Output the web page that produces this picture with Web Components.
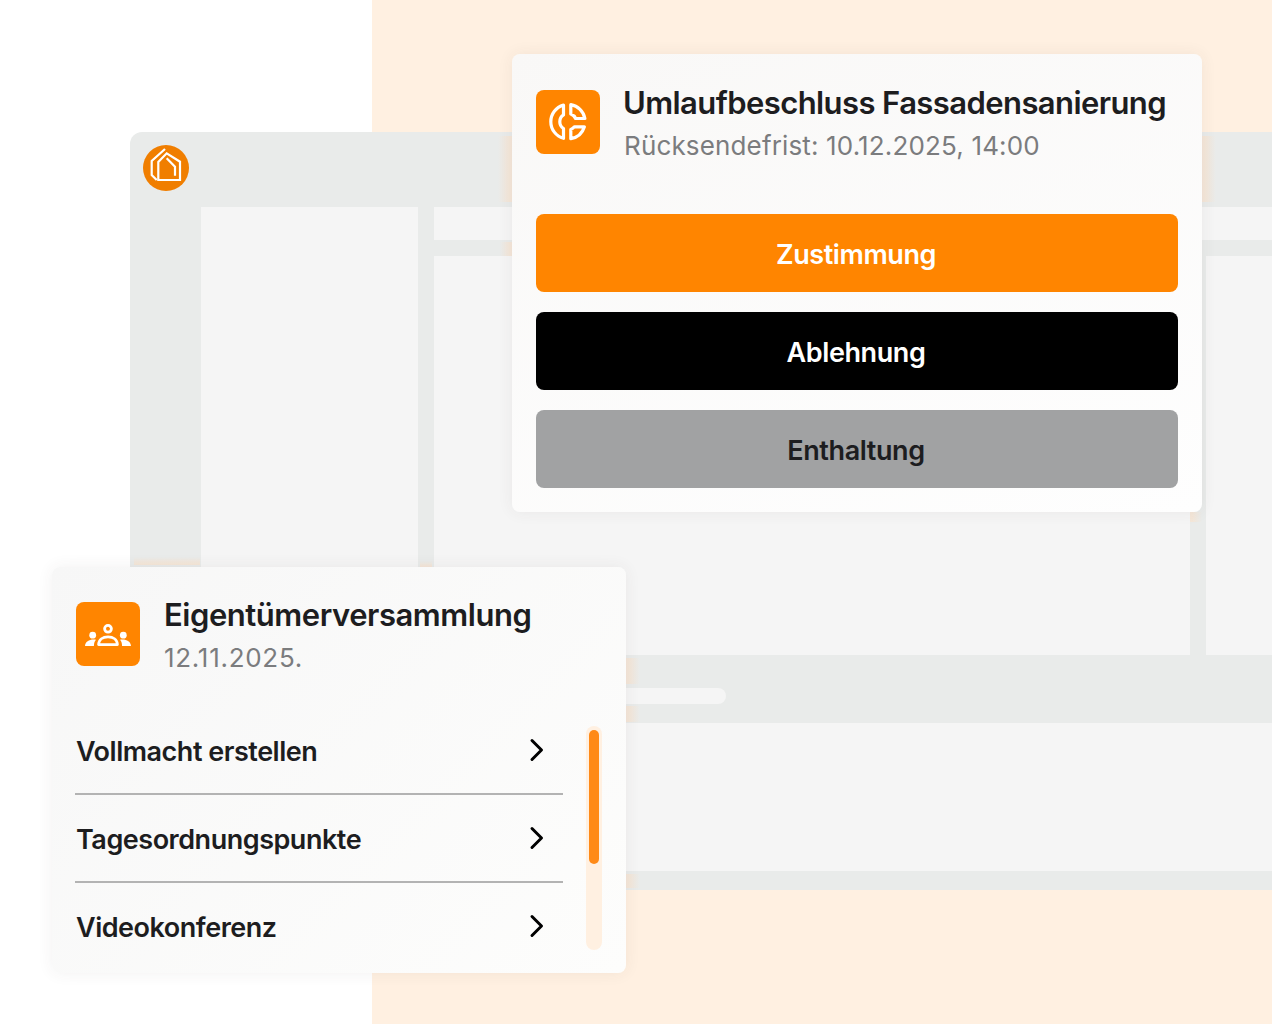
<!DOCTYPE html>
<html lang="de">
<head>
<meta charset="utf-8">
<title>Eigentümerversammlung</title>
<style>
    html, body { margin: 0; background: #fff; }
    body { font-family: Inter, "Liberation Sans", sans-serif; }
</style>
</head>
<body>
<demo-stage>
    <app-window></app-window>
    <vote-card slot="over" titel="Umlaufbeschluss Fassadensanierung" info="Rücksendefrist: 10.12.2025, 14:00">
        <svg slot="icon" viewBox="0 0 64 64" width="64" height="64" fill="none" stroke="#fff" stroke-width="3.2" stroke-linejoin="round">
            <path d="M27.5 15.1A17.2 17.2 0 0 0 27.5 48.3V38.5A8.1 8.1 0 0 1 27.5 24.9Z"/>
            <path d="M34.8 14.7A17.2 17.2 0 0 1 48.9 28.5H39.6A8.2 8.2 0 0 0 34.8 24Z"/>
            <path d="M48.4 36.8A17.2 17.2 0 0 1 34.8 48.7V39.4A8.2 8.2 0 0 0 38.4 36.8Z"/>
        </svg>
        <vote-button farbe="orange">Zustimmung</vote-button>
        <vote-button farbe="schwarz">Ablehnung</vote-button>
        <vote-button farbe="grau">Enthaltung</vote-button>
    </vote-card>
    <event-card slot="over" titel="Eigentümerversammlung" info="12.11.2025.">
        <svg slot="icon" viewBox="0 0 64 64" width="64" height="64" fill="#fff">
            <path fill="none" stroke="#fff" stroke-width="2.8" d="M32 23.4a3.4 3.4 0 1 0 0 6.8a3.4 3.4 0 1 0 0-6.8Z"/>
            <path fill="none" stroke="#fff" stroke-width="2.8" stroke-linejoin="round" d="M22.6 42.6C22.8 37.4 27 34.8 32 34.8C37 34.8 41.2 37.4 41.4 42.6Z"/>
            <circle cx="16.7" cy="33.2" r="3.4"/>
            <circle cx="47.3" cy="33.2" r="3.4"/>
            <path d="M9 44C9.2 39.6 13 37.4 17.6 37.4C18.4 37.4 19.2 37.5 20 37.7C18.6 39.2 18 41 17.9 44Z"/>
            <path d="M55 44C54.8 39.6 51 37.4 46.4 37.4C45.6 37.4 44.8 37.5 44 37.7C45.4 39.2 46 41 46.1 44Z"/>
        </svg>
        <list-row>Vollmacht erstellen</list-row>
        <list-row>Tagesordnungspunkte</list-row>
        <list-row>Videokonferenz</list-row>
    </event-card>
</demo-stage>

<script>
    // gemeinsamer Kopf der beiden Karten
    const cardHead = `
        <div class="head">
            <div class="badge"><slot name="icon"></slot></div>
            <div class="texts">
                <div class="titel"></div>
                <div class="info"></div>
            </div>
        </div>`;

    const cardStyle = `
        .head { display: flex; gap: 24px; }
        .badge { width: 64px; height: 64px; border-radius: 8px; background: #ff8500; flex: none; display: flex; }
        .titel { font-size: 31px; line-height: 36px; font-weight: 600; color: #1d1d1f; white-space: nowrap; margin-top: -5px; }
        .info { font-size: 26px; line-height: 32px; color: #7b7c7e; margin-top: 9px; white-space: nowrap; }
    `;

    // Farbreste am Kartenrand: left, top, width, height, Richtung
    const spots = [
        [368, 4, 14, 66, 'to right'],
        [370, 110, 12, 14, 'to right'],
        [1072, 4, 14, 66, 'to left'],
        [1060, 380, 12, 10, 'to left'],
        [4, 425, 66, 8, 'to bottom'],
        [290, 429, 12, 6, 'to bottom'],
        [496, 526, 14, 26, 'to left'],
        [496, 574, 14, 16, 'to left'],
        [496, 742, 14, 14, 'to left']
    ];

    class DemoStage extends HTMLElement {
        constructor() {
            super();
            this.shadow = this.attachShadow({mode: 'open'});
            this.shadow.innerHTML = `
            <style>
                :host { display: block; width: 1272px; height: 1024px; position: relative; overflow: hidden; background: #fff; }
                .peach { margin-left: 372px; height: 1024px; background: #fff0e1; }
                .canvas { position: absolute; inset: 0; }
            </style>
            <div class="peach"></div>
            <div class="canvas"><slot></slot><slot name="over"></slot></div>
            `;
        }
    }

    class AppWindow extends HTMLElement {
        constructor() {
            super();
            this.shadow = this.attachShadow({mode: 'open'});
            const spotHtml = spots.map(([x, y, w, h, dir]) =>
                `<i style="left:${x}px;top:${y}px;width:${w}px;height:${h}px;background:linear-gradient(${dir},rgba(246,230,214,0),rgba(246,230,214,.85) 80%)"></i>`
            ).join('');
            this.shadow.innerHTML = `
            <style>
                :host { display: block; position: absolute; left: 130px; top: 132px; width: 1142px; height: 758px; }
                .frame {
                    height: 100%; background: #e9ebea; border-top-left-radius: 12px; position: relative;
                    display: grid;
                    grid-template-columns: 71px 217px 16px 756px 16px 1fr;
                    grid-template-rows: 75px 33px 16px 399px 68px 148px 19px;
                }
                .logo { grid-column: 1 / -1; padding: 13px; }
                .logo svg { display: block; }
                .p { background: #f5f5f5; }
                .side { grid-column: 2; grid-row: 2 / 5; }
                .strip { grid-column: 4 / 7; grid-row: 2; }
                .main { grid-column: 4; grid-row: 4; }
                .right { grid-column: 6; grid-row: 4; }
                .bar { grid-column: 2 / 7; grid-row: 5; padding: 33px 0 0 200px; }
                .pill { width: 325px; height: 16px; border-radius: 8px; background: #f5f5f5; }
                .lower { grid-column: 2 / 7; grid-row: 6; }
                i { position: absolute; display: block; }
            </style>
            <div class="frame">
                <div class="logo">
                    <svg viewBox="0 0 46 46" width="46" height="46" fill="none" stroke="#fff" stroke-width="2.2">
                        <circle cx="23" cy="23" r="23" fill="#f07e00" stroke="none"/>
                        <path d="M22 4L8.7 16V30L13.7 35"/>
                        <path d="M15.3 35V17L23.7 8.3L37 16.7V35Z"/>
                        <path d="M23.7 13.3L32 21.7V30.7"/>
                    </svg>
                </div>
                <div class="p side"></div>
                <div class="p strip"></div>
                <div class="p main"></div>
                <div class="p right"></div>
                <div class="bar"><div class="pill"></div></div>
                <div class="p lower"></div>
                ${spotHtml}
            </div>
            `;
        }
    }

    class VoteCard extends HTMLElement {
        constructor() {
            super();
            this.shadow = this.attachShadow({mode: 'open'});
        }

        connectedCallback() {
            this.shadow.innerHTML = `
            <style>
                :host { display: block; position: absolute; left: 512px; top: 54px; width: 690px; height: 458px; box-sizing: border-box; padding: 36px 24px 24px; background: linear-gradient(160deg, #f9f8f7, #fefefe); border-radius: 8px; box-shadow: 0 0 16px rgba(70, 60, 50, .07); }
                ${cardStyle}
                .titel { letter-spacing: -0.58px; margin-left: -1px; }
                .info { letter-spacing: 0.15px; }
                .buttons { display: flex; flex-direction: column; gap: 20px; margin-top: 52px; }
            </style>
            ${cardHead}
            <div class="buttons"><slot></slot></div>
            `;
            this.shadow.querySelector('.titel').textContent = this.getAttribute('titel');
            this.shadow.querySelector('.info').textContent = this.getAttribute('info');
        }
    }

    class VoteButton extends HTMLElement {
        constructor() {
            super();
            this.shadow = this.attachShadow({mode: 'open'});
            this.shadow.innerHTML = `
            <style>
                :host { display: flex; height: 78px; border-radius: 8px; align-items: center; justify-content: center; font-size: 27px; font-weight: 600; letter-spacing: -0.4px; padding: 3px 2px 0 0; box-sizing: border-box; }
                :host([farbe="orange"]) { background: #ff8500; color: #fff; }
                :host([farbe="schwarz"]) { background: #000; color: #fff; }
                :host([farbe="grau"]) { background: #a1a2a3; color: #1d1d1f; }
            </style>
            <slot></slot>
            `;
        }
    }

    class EventCard extends HTMLElement {
        constructor() {
            super();
            this.shadow = this.attachShadow({mode: 'open'});
        }

        connectedCallback() {
            this.shadow.innerHTML = `
            <style>
                :host { display: block; position: absolute; left: 52px; top: 567px; width: 574px; height: 406px; box-sizing: border-box; padding: 35px 24px 0; background: linear-gradient(135deg, #f7f7f7, #fdfdfc); border-radius: 8px; box-shadow: 0 0 16px rgba(70, 60, 50, .07); }
                ${cardStyle}
                .titel { letter-spacing: -0.45px; }
                .info { letter-spacing: 0.72px; }
                .scroller { display: grid; grid-template-columns: 488px 16px; column-gap: 23px; margin-top: 52px; margin-left: -1px; }
                .rows { margin-top: -19px; }
                .track { width: 16px; height: 224px; border-radius: 8px; background: #fff0e1; padding: 4px 3px; box-sizing: border-box; }
                .thumb { height: 134px; border-radius: 5px; background: #ff8a17; }
            </style>
            ${cardHead}
            <div class="scroller">
                <div class="rows"><slot></slot></div>
                <div class="track"><div class="thumb"></div></div>
            </div>
            `;
            this.shadow.querySelector('.titel').textContent = this.getAttribute('titel');
            this.shadow.querySelector('.info').textContent = this.getAttribute('info');
        }
    }

    class ListRow extends HTMLElement {
        constructor() {
            super();
            this.shadow = this.attachShadow({mode: 'open'});
            this.shadow.innerHTML = `
            <style>
                :host { display: flex; height: 88px; box-sizing: border-box; border-bottom: 2px solid #b3b3b3; align-items: center; justify-content: space-between; font-size: 27px; font-weight: 600; letter-spacing: -0.48px; color: #1d1d1f; padding: 0 18px 0 1px; }
                :host(:last-child) { border-bottom-color: transparent; }
                .t { padding-top: 2px; }
                svg { display: block; }
            </style>
            <span class="t"><slot></slot></span>
            <svg viewBox="0 0 16 24" width="16" height="24" fill="none" stroke="#000" stroke-width="3" stroke-linecap="round" stroke-linejoin="round"><path d="M3 2.5L12.5 12L3 21.5"/></svg>
            `;
        }
    }

    customElements.define('demo-stage', DemoStage);
    customElements.define('app-window', AppWindow);
    customElements.define('vote-card', VoteCard);
    customElements.define('vote-button', VoteButton);
    customElements.define('event-card', EventCard);
    customElements.define('list-row', ListRow);
</script>
</body>
</html>
